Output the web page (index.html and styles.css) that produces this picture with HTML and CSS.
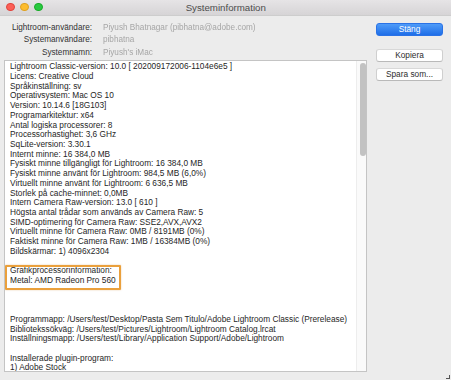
FILE: index.html
```html
<!DOCTYPE html>
<html lang="sv">
<head>
<meta charset="utf-8">
<title>Systeminformation</title>
<link rel="stylesheet" href="styles.css">
</head>
<body>
<div class="window">
  <div class="titlebar">
    <div class="lights">
      <span class="light red"></span>
      <span class="light yellow"></span>
      <span class="light green"></span>
    </div>
    <div class="title">Systeminformation</div>
  </div>
  <div class="content">
    <div class="left">
      <div class="header">
        <div class="label">Lightroom-användare:</div>
        <div class="value">Piyush Bhatnagar (pibhatna@adobe.com)</div>
        <div class="label">Systemanvändare:</div>
        <div class="value">pibhatna</div>
        <div class="label">Systemnamn:</div>
        <div class="value">Piyush's iMac</div>
      </div>
      <div class="textbox">
        <div class="text">
          <div class="ln">Lightroom Classic-version: 10.0 [ 202009172006-1104e6e5 ]</div>
          <div class="ln">Licens: Creative Cloud</div>
          <div class="ln">Språkinställning: sv</div>
          <div class="ln">Operativsystem: Mac OS 10</div>
          <div class="ln">Version: 10.14.6 [18G103]</div>
          <div class="ln">Programarkitektur: x64</div>
          <div class="ln">Antal logiska processorer: 8</div>
          <div class="ln">Processorhastighet: 3,6 GHz</div>
          <div class="ln">SqLite-version: 3.30.1</div>
          <div class="ln">Internt minne: 16 384,0 MB</div>
          <div class="ln">Fysiskt minne tillgängligt för Lightroom: 16 384,0 MB</div>
          <div class="ln">Fysiskt minne använt för Lightroom: 984,5 MB (6,0%)</div>
          <div class="ln">Virtuellt minne använt för Lightroom: 6 636,5 MB</div>
          <div class="ln">Storlek på cache-minnet: 0,0MB</div>
          <div class="ln">Intern Camera Raw-version: 13.0 [ 610 ]</div>
          <div class="ln">Högsta antal trådar som används av Camera Raw: 5</div>
          <div class="ln">SIMD-optimering för Camera Raw: SSE2,AVX,AVX2</div>
          <div class="ln">Virtuellt minne för Camera Raw: 0MB / 8191MB (0%)</div>
          <div class="ln">Faktiskt minne för Camera Raw: 1MB / 16384MB (0%)</div>
          <div class="ln">Bildskärmar: 1) 4096x2304</div>
          <div class="ln blank"></div>
          <div class="highlight">
            <div class="ln">Grafikprocessorinformation:</div>
            <div class="ln">Metal: AMD Radeon Pro 560</div>
          </div>
          <div class="ln blank"></div>
          <div class="ln blank"></div>
          <div class="ln blank"></div>
          <div class="ln">Programmapp: /Users/test/Desktop/Pasta Sem Titulo/Adobe Lightroom Classic (Prerelease)</div>
          <div class="ln">Bibliotekssökväg: /Users/test/Pictures/Lightroom/Lightroom Catalog.lrcat</div>
          <div class="ln">Inställningsmapp: /Users/test/Library/Application Support/Adobe/Lightroom</div>
          <div class="ln blank"></div>
          <div class="ln">Installerade plugin-program:</div>
          <div class="ln">1) Adobe Stock</div>
        </div>
        <div class="scrollbar"><div class="thumb"></div></div>
      </div>
    </div>
    <div class="right">
      <button class="btn primary">Stäng</button>
      <button class="btn copy">Kopiera</button>
      <button class="btn save">Spara som...</button>
    </div>
  </div>
  <div class="grip"></div>
</div>
</body>
</html>
```
FILE: styles.css
```css
html, body {
  margin: 0;
  padding: 0;
}
body {
  width: 451px;
  height: 380px;
  overflow: hidden;
  background: #ececec;
  font-family: "Liberation Sans", Arial, sans-serif;
}
.window {
  position: relative;
  width: 451px;
  height: 380px;
  display: flex;
  flex-direction: column;
  background: #ececec;
}
.titlebar {
  height: 16px;
  flex: none;
  display: flex;
  align-items: center;
  background: linear-gradient(#e6e4e6, #d6d4d6);
  border-bottom: 1px solid #cdcdcd;
  box-sizing: border-box;
  position: relative;
}
.lights {
  display: flex;
  gap: 5.5px;
  padding-left: 6px;
  margin-top: -1px;
}
.light {
  width: 8.5px;
  height: 8.5px;
  border-radius: 50%;
  box-sizing: border-box;
}
.red { background: #fc5f57; border: 0.5px solid #e0443e; }
.yellow { background: #fdbc2e; border: 0.5px solid #dea123; }
.green { background: #29c940; border: 0.5px solid #1aab29; }
.title {
  flex: 1;
  text-align: center;
  font-size: 9.7px;
  color: #4c4c4c;
  margin-left: -42px;
  margin-top: -1px;
}
.content {
  flex: 1;
  display: flex;
  padding: 5px 8px 8px 4px;
  gap: 9px;
  min-height: 0;
}
.left {
  width: 363px;
  display: flex;
  flex-direction: column;
}
.header {
  display: grid;
  grid-template-columns: 88px 1fr;
  column-gap: 11px;
  grid-auto-rows: 12.5px;
  align-items: center;
  font-size: 8.2px;
  margin-bottom: 1.5px;
}
.label {
  text-align: right;
  color: #333;
}
.value {
  color: #a6a6a6;
  filter: blur(0.35px);
}
.textbox {
  flex: 1;
  display: flex;
  background: #fff;
  border: 1px solid #c4c4c4;
  min-height: 0;
  overflow: hidden;
}
.text {
  flex: 1;
  padding: 1.2px 0 0 5px;
  font-size: 8.3px;
  line-height: 9.72px;
  color: #262626;
  white-space: nowrap;
  overflow: hidden;
}
.ln { height: 9.72px; }
.highlight {
  position: relative;
  width: max-content;
}
.highlight::after {
  content: "";
  position: absolute;
  left: -5px;
  right: -5.5px;
  top: -1.5px;
  bottom: -4px;
  border: 2px solid #eaa03c;
  border-radius: 1px;
  box-shadow: 0 0 1.5px rgba(200, 120, 20, 0.5);
}
.scrollbar {
  width: 10px;
  flex: none;
  background: #fafafa;
  border-left: 1px solid #ededed;
  padding: 2px 0 0 3px;
  box-sizing: border-box;
}
.thumb {
  width: 5.5px;
  height: 93px;
  border-radius: 3px;
  background: #c2c2c2;
}
.right {
  width: 67px;
  display: flex;
  flex-direction: column;
  padding-top: 1.5px;
}
.btn {
  height: 13px;
  padding: 0;
  font-family: "Liberation Sans", Arial, sans-serif;
  font-size: 8.3px;
  border-radius: 3px;
  box-sizing: border-box;
  line-height: 11px;
}
.primary {
  color: #fff;
  border: 1px solid #2a72e6;
  background: linear-gradient(#4e9bf8, #1f6ee8);
}
.copy, .save {
  color: #2c2c2c;
  background: #fff;
  border: 1px solid #cfcfcf;
  border-top-color: #d8d8d8;
  border-bottom-color: #b9b9b9;
}
.copy { margin-top: 13px; }
.save { margin-top: 6.5px; }
.grip {
  position: absolute;
  right: 1px;
  bottom: 1px;
  width: 3px;
  height: 3px;
  border-right: 1px solid #555;
  border-bottom: 1px solid #555;
}
```
